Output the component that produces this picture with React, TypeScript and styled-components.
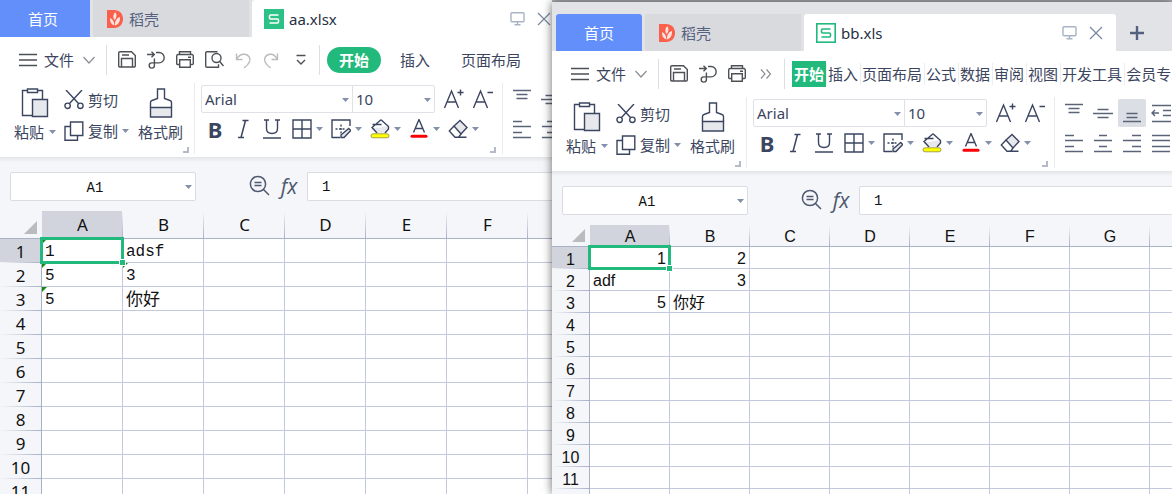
import React from "react";
import styled, { createGlobalStyle, css } from "styled-components";

const ui = `"Noto Sans", "Noto Sans CJK SC", sans-serif`;
const cjk = `"Noto Sans CJK SC", sans-serif`;
const mono = `"Liberation Mono", "Noto Sans CJK SC", monospace`;
const arial = `"Liberation Sans", "Noto Sans CJK SC", sans-serif`;

const ink = "#3b4560";
const green = "#21ba7c";
const gridLine = "#c3c9dc";
const headLine = "#a8b1c8";
const chrome = "#f5f6f9";

const GlobalStyle = createGlobalStyle`
  *, *::before, *::after { box-sizing: border-box; }
  body { margin: 0; overflow: hidden; font-family: ${ui}; font-size: 15px; color: ${ink}; }
  button, input, select { font: inherit; color: inherit; border: 0; padding: 0; margin: 0; background: none; }
  svg { display: block; flex: none; }
`;

/* ---------- windows ---------- */

const Desktop = styled.main`
  display: flex;
  height: 100vh;
  overflow: hidden;
  background: #b2b3b5;
`;

const Win = styled.section<{ $front?: boolean }>`
  flex: ${(p) => (p.$front ? "620 1 0" : "552 1 0")};
  min-width: 0;
  display: flex;
  flex-direction: column;
  background: #fff;
  ${(p) =>
    p.$front
      ? css`
          margin-top: 2px;
          position: relative;
          z-index: 1;
          box-shadow: 0 0 9px rgba(0, 0, 0, 0.6);
          clip-path: inset(-10px 0 0 -14px);
        `
      : css`
          overflow: hidden;
        `}
`;

const WinBody = styled.div`
  flex: 1;
  min-height: 0;
  overflow: hidden;
  display: flex;
  flex-direction: column;
`;

/* ---------- document tabs ---------- */

const TabStrip = styled.header<{ $inset?: boolean }>`
  display: flex;
  flex: none;
  gap: 3px;
  padding: ${(p) => (p.$inset ? "12px 0 0 4px" : "0")};
  background: #e2e3e7;
  overflow: hidden;
`;

const Tab = styled.button<{ $kind: "home" | "plain" }>`
  flex: none;
  display: flex;
  align-items: center;
  height: 37px;
  gap: 6px;
  line-height: 20px;
  ${(p) =>
    p.$kind === "home"
      ? css`
          justify-content: center;
          background: #638ffb;
          color: #fff;
        `
      : css`
          width: 156px;
          padding-left: 14px;
          background: #d9dadd;
          color: #56617f;
        `}
`;

const HomeTab = styled(Tab)<{ $round?: boolean }>`
  width: ${(p) => (p.$round ? "86px" : "90px")};
  padding-right: ${(p) => (p.$round ? "0" : "4px")};
  border-radius: ${(p) => (p.$round ? "3px 3px 0 0" : "0")};
`;

const ActiveTab = styled.div`
  flex: none;
  width: 312px;
  height: 37px;
  display: flex;
  align-items: center;
  padding: 0 12px;
  background: #fff;
  color: #262f43;
  border-radius: 3px 3px 0 0;
`;

const FileName = styled.span`
  flex: 1;
  padding-left: 5px;
  line-height: 20px;
`;

const TabAction = styled.button`
  width: 16px;
  height: 16px;
  margin-left: 11px;
  display: grid;
  place-items: center;
`;

const AddTab = styled.button`
  flex: none;
  width: 36px;
  height: 37px;
  display: grid;
  place-items: center;
`;

/* ---------- quick access bar and menu ---------- */

const Bar = styled.div`
  flex: none;
  display: flex;
  align-items: center;
  height: 46px;
  overflow: hidden;
`;

const FileButton = styled.button`
  flex: none;
  display: flex;
  align-items: center;
  height: 30px;
  width: 107px;
  padding-left: 19px;
  border-right: 1px solid #dcdee4;
  font-family: ${cjk};
  line-height: 20px;
`;

const FileLabel = styled.span`
  margin: 0 9px 0 7px;
`;

const QuickTools = styled.div`
  flex: none;
  display: flex;
  height: 30px;
  padding: 0 4px 0 5px;
  border-right: 1px solid #dcdee4;
`;

const QuickButton = styled.button`
  width: 29px;
  height: 30px;
  display: grid;
  place-items: center;
`;

const Menu = styled.nav<{ $dense?: boolean }>`
  display: flex;
  align-items: center;
  flex: none;
  padding-left: 7px;
  gap: ${(p) => (p.$dense ? "0" : "7px")};
`;

const MenuItem = styled.button<{ $dense?: boolean; $on?: boolean }>`
  flex: none;
  font-family: ${cjk};
  line-height: 20px;
  white-space: nowrap;
  ${(p) =>
    p.$dense
      ? css`
          height: 22px;
          padding: 0 2px 0 1px;
          border-left: 1px solid #eceef1;
        `
      : css`
          height: 26px;
          padding: 0 12px;
          border-radius: 13px;
        `}
  ${(p) =>
    p.$on &&
    css`
      height: 26px;
      background: ${green};
      border-color: ${green};
      color: #fff;
      font-weight: 700;
    `}
`;

/* ---------- ribbon ---------- */

const RibbonBar = styled.div`
  flex: none;
  display: flex;
  height: 74px;
  padding-bottom: 3px;
  overflow: hidden;
`;

const Group = styled.div`
  flex: none;
  display: flex;
  border-right: 1px solid #e8eaee;
`;

const ClipGroup = styled(Group)`
  padding: 1px 5px 1px 14px;
  align-items: flex-start;
`;

const FontGroup = styled(Group)`
  flex-direction: column;
  gap: 4px;
  padding: 2px 6px 1px;
`;

const AlignGroup = styled(Group)`
  flex-direction: column;
  gap: 2px;
  padding: 2px 0 0 5px;
  border-right: 0;
`;

const Row = styled.div`
  display: flex;
`;

const BigButton = styled.button<{ $wide?: boolean }>`
  display: flex;
  flex-direction: column;
  align-items: center;
  width: ${(p) => (p.$wide ? "45px" : "42px")};
  padding-top: 4px;
  gap: 4px;
  font-family: ${cjk};
  line-height: 20px;
  white-space: nowrap;
`;

const Inline = styled.span`
  display: flex;
  align-items: center;
  gap: 5px;
`;

const Stack = styled.div`
  width: 65px;
  margin: 0 9px 0 8px;
`;

const SmallButton = styled.button`
  display: flex;
  align-items: center;
  gap: 4px;
  height: 31px;
  font-family: ${cjk};
  line-height: 20px;
  white-space: nowrap;
`;

const Corner = styled.button`
  align-self: flex-end;
  margin-left: auto;
  width: 6px;
  height: 6px;
  border-right: 2px solid #b4bac8;
  border-bottom: 2px solid #b4bac8;
`;

const Combo = styled.label<{ $first?: boolean }>`
  position: relative;
  width: ${(p) => (p.$first ? "152px" : "83px")};
  height: 28px;
  margin-right: ${(p) => (p.$first ? "-1px" : "8px")};
  border: 1px solid #dfe1e6;
  border-radius: ${(p) => (p.$first ? "2px 0 0 2px" : "0 2px 2px 0")};
`;

const ComboSelect = styled.select`
  appearance: none;
  width: 100%;
  height: 26px;
  padding-left: 3px;
  line-height: 26px;
  outline: 0;
`;

const ComboCaret = styled.span`
  position: absolute;
  right: 3px;
  top: 12px;
  pointer-events: none;
`;

const SizeButtons = styled.div`
  display: flex;
  gap: 7px;
`;

const SizeButton = styled.button`
  width: 22px;
  height: 27px;
  display: grid;
  place-items: center;
`;

const FormatRow = styled(Row)`
  width: 295px;
  height: 36px;
`;

const LetterButton = styled.button`
  width: 28px;
  height: 24px;
  display: grid;
  place-items: center;
`;

const BoldLetter = styled.span`
  font-size: 22px;
  line-height: 24px;
  font-weight: 700;
`;

const SplitTools = styled.div`
  display: flex;
  gap: 8px;
  padding-left: 7px;
`;

const SplitButton = styled.button`
  display: flex;
  align-items: center;
  gap: 4px;
  height: 24px;
`;

const AlignRow = styled(Row)`
  gap: 1px;
`;

const AlignButton = styled.button<{ $on?: boolean }>`
  width: 28px;
  height: 28px;
  display: grid;
  place-items: center;
  border-radius: 2px;
  background: ${(p) => (p.$on ? "#dbdfe5" : "transparent")};
`;

/* ---------- formula bar ---------- */

const FormulaBar = styled.div`
  flex: none;
  display: flex;
  align-items: center;
  height: 54px;
  padding: 5px 0 0 10px;
  background: linear-gradient(#e3e4e7, ${chrome} 5px);
  font-family: ${mono};
  font-size: 14px;
  color: #111;
`;

const NameBox = styled.div`
  flex: none;
  display: flex;
  align-items: center;
  width: 186px;
  height: 29px;
  border: 1px solid #dadce2;
  border-radius: 2px;
  background: #fff;
`;

const NameInput = styled.input`
  width: 168px;
  height: 27px;
  padding-top: 2px;
  text-align: center;
  outline: 0;
`;

const NameCaret = styled.button`
  flex: 1;
  height: 27px;
  display: flex;
  align-items: center;
  justify-content: flex-end;
  padding-right: 3px;
`;

const FormulaTools = styled.div`
  flex: none;
  display: flex;
  align-items: center;
  justify-content: flex-end;
  gap: 9px;
  width: 111px;
  padding-right: 8px;
`;

const FormulaTool = styled.button`
  height: 29px;
  padding-bottom: 2px;
  display: grid;
  place-items: center;
  color: #4f5970;
`;

const Fx = styled.span`
  width: 20px;
  font-family: "Open Sans", ${ui};
  font-style: italic;
  font-weight: 400;
  font-size: 21px;
  line-height: 24px;
`;

const FormulaInput = styled.input`
  flex: 1;
  min-width: 0;
  height: 29px;
  padding: 0 0 0 14px;
  border: 1px solid #dadce2;
  border-right: 0;
  border-radius: 2px 0 0 2px;
  background: #fff;
  outline: 0;
`;

/* ---------- sheet ---------- */

const SheetArea = styled.div`
  flex: 1;
  min-height: 0;
  overflow: hidden;
  background: ${chrome};
`;

type Size = { $big?: boolean };

const Sheet = styled.table<Size>`
  table-layout: fixed;
  width: max-content;
  border-collapse: separate;
  border-spacing: 0;
  font-family: ${(p) => (p.$big ? mono : arial)};
  font-size: 16px;
  line-height: 19px;
  color: #111;
`;

const HeadCol = styled.col<Size>`
  width: ${(p) => (p.$big ? "42px" : "38px")};
`;

const DataCol = styled.col<Size>`
  width: ${(p) => (p.$big ? "81px" : "80px")};
`;

const ColHead = styled.th<Size & { $on?: boolean }>`
  height: ${(p) => (p.$big ? "28px" : "22px")};
  padding: ${(p) => (p.$big ? "0" : "2px 0 0")};
  font-family: ${(p) => (p.$big ? ui : arial)};
  font-size: ${(p) => (p.$big ? "17px" : "16px")};
  font-weight: 400;
  border-bottom: 1px solid ${headLine};
  background: linear-gradient(${chrome}, ${headLine}) right / 1px 100% no-repeat
    ${(p) => (p.$on ? "#d1d4dc" : chrome)};
`;

const CornerHead = styled.th`
  padding: 0 5px 4px 0;
  vertical-align: bottom;
  border-bottom: 1px solid ${headLine};
  background: ${chrome};
  svg {
    margin-left: auto;
  }
`;

const RowHead = styled.th<Size & { $on?: boolean }>`
  height: ${(p) => (p.$big ? "24px" : "22px")};
  padding: ${(p) => (p.$big ? "0" : "2px 0 0")};
  font-family: ${(p) => (p.$big ? ui : arial)};
  font-size: ${(p) => (p.$big ? "17px" : "16px")};
  font-weight: 400;
  border-right: 1px solid ${headLine};
  background: linear-gradient(90deg, ${chrome}, ${headLine}) bottom / 100% 1px no-repeat
    ${(p) => (p.$on ? "#d1d4dc" : chrome)};
`;

const Cell = styled.td<Size & { $num?: boolean; $flag?: boolean; $wide?: boolean }>`
  position: relative;
  padding: ${(p) => (p.$big ? "4px 3px 0" : "2px 3px 0")};
  ${(p) =>
    p.$wide &&
    css`
      font-size: 17px;
    `}
  border-right: 1px solid ${gridLine};
  border-bottom: 1px solid ${gridLine};
  background: #fff;
  text-align: ${(p) => (p.$num ? "right" : "left")};
  white-space: nowrap;
  ${(p) =>
    p.$flag &&
    css`
      &::before {
        content: "";
        position: absolute;
        left: 0;
        top: 0;
        border-top: 5px solid #128a12;
        border-right: 5px solid transparent;
      }
    `}
`;

const Selection = styled.span`
  position: absolute;
  inset: -2px;
  z-index: 1;
  border: 3px solid ${green};
  &::after {
    content: "";
    position: absolute;
    right: -5px;
    bottom: -5px;
    width: 7px;
    height: 7px;
    border: 1px solid #fff;
    background: ${green};
  }
`;

/* ---------- icons ---------- */

const Caret = () => (
  <svg width="7" height="4" viewBox="0 0 7 4">
    <path d="M0 0h7L3.5 4z" fill="#8290ac" />
  </svg>
);

type IconProps = { w?: number; h?: number; color?: string; sw?: number; children: React.ReactNode };
const Icon = ({ w = 20, h = 20, color = ink, sw = 1.4, children }: IconProps) => (
  <svg width={w} height={h} viewBox={`0 0 ${w} ${h}`} fill="none" stroke={color} strokeWidth={sw} aria-hidden="true">
    {children}
  </svg>
);

const tool = "#4d5055";
const Hamburger = () => (
  <Icon w={18} h={14} color={tool}><path d="M0 1.5h18M0 7h18M0 12.5h18" /></Icon>
);
const ChevronDown = () => (
  <Icon w={12} h={8} color="#8b8e95" sw={1.2}><path d="M.5 1 6 7l5.5-6" /></Icon>
);
const SaveIcon = () => (
  <Icon color={tool}>
    <path d="M3 1.7h11.5l3.8 3.8V16a1 1 0 0 1-1 1H3a1.3 1.3 0 0 1-1.3-1V3A1.3 1.3 0 0 1 3 1.7z" />
    <path d="M4.5 17V8.5h11V17M5 5h7" />
  </Icon>
);
const LinkIcon = () => (
  <Icon color={tool}>
    <path d="M1 4.5h7M5.5 1.8l2.8 2.7-2.8 2.7" />
    <path d="M10 2.5h3a5.2 5.2 0 0 1 0 10.4H5.8a2.6 2.6 0 1 0 2.6 2.6V8.5" />
  </Icon>
);
const PrintIcon = () => (
  <Icon color={tool}>
    <path d="M4.5 4.5V1.7h11v2.8M4.5 14.5H2.7a1 1 0 0 1-1-1V6A1.5 1.5 0 0 1 3.2 4.5h13.6A1.5 1.5 0 0 1 18.3 6v7.5a1 1 0 0 1-1 1h-1.8" />
    <path d="M4.7 9.8h10.6v7.5H4.7zM13 7.3h3" />
  </Icon>
);
const PreviewIcon = () => (
  <Icon color={tool}>
    <path d="M13.5 1.7H3A1.3 1.3 0 0 0 1.7 3v13A1.3 1.3 0 0 0 3 17.3h11.5v-3" />
    <circle cx="12.5" cy="8" r="4.5" />
    <path d="m15.7 11.5 3.8 4.5" />
  </Icon>
);
const UndoIcon = () => (
  <Icon color="#b9bbbf"><path d="M3.5 3.5v6h6M3.7 9.2C6 5 9 3.8 12 4.3c4 .8 6 4 4.5 7.5-1 2.5-3 4.5-5.5 6" /></Icon>
);
const RedoIcon = () => (
  <Icon color="#b9bbbf"><path d="M15.5 3.5v6h-6M15.3 9.2C13 5 10 3.8 7.5 4.3c-4 .8-6 4-4.5 7.5 1 2.5 3 4.5 5.5 6" /></Icon>
);
const MoreIcon = () => (
  <Icon w={12} h={12} color={tool}><path d="M1.500 1.500h9M2 6l4 4 4-4" /></Icon>
);
const DoubleChevron = () => (
  <Icon w={12} h={12} color="#8b8e95" sw={1.2}><path d="m1 1.500 4 4.500-4 4.500M6.500 1.500l4 4.500-4 4.500" /></Icon>
);
const Rice = () => (
  <svg width="16" height="18" viewBox="0 0 16 18" aria-hidden="true">
    <path d="M0 0h7c5.500 0 9 3.800 9 9s-3.500 9-9 9H0z" fill="#fa604c" />
    <path d="M7.500 15.500c-3-1-4.800-3.500-4.500-7.300C5.500 9 7 11 7.500 15.500zM8 15.500c-.2-4.500 1.500-7.500 5-8.500.3 4.500-1.500 7.500-5 8.500zM6.600 8.500C6 6 6.500 4 8.200 2.300 9.600 4 9.800 5.500 9 8c-.5.700-.9 1.300-1.200 2z" fill="#ffe3dd" />
  </svg>
);
const SheetLogo = ({ outline }: { outline?: boolean }) => (
  <Icon color={outline ? green : "#fff"} sw={1.6}>
    <rect x=".8" y=".8" width="18.4" height="18.4" fill={outline ? "#fff" : "#2cc187"} stroke={outline ? green : "#2cc187"} />
    <path d="M14.500 6H6.700Q5.500 6 5.500 7.200v1.600Q5.500 10 6.700 10h6.600q1.200 0 1.200 1.200v1.600q0 1.200-1.200 1.200H5.500" />
  </Icon>
);
const Monitor = () => (
  <Icon w={15} h={15} color="#a9b3c6"><rect x="1" y="1.7" width="13" height="9" rx="1" /><path d="M7.500 11v2.500M4.500 13.800h6" /></Icon>
);
const Close = () => (
  <Icon w={14} h={14} color="#7c89a5" sw={1.3}><path d="m1 1 12 12M13 1 1 13" /></Icon>
);
const Plus = () => (
  <Icon w={16} h={16} color="#53617f" sw={2.4}><path d="M8 1v14M1 8h14" /></Icon>
);
const PasteIcon = () => (
  <Icon w={28} h={30}>
    <path d="M6 2.500H1.500v25H11M17 2.500h4.500V11M6.500 1h10v3.500h-10z" />
    <path d="M11.500 11.500h15v17h-15z" fill="#e6e8ec" />
  </Icon>
);
const Scissors = () => (
  <Icon><path d="M2 0l12.500 13.500M18 0 5.500 13.500" /><circle cx="3.600" cy="15.800" r="2.700" /><circle cx="16.400" cy="15.800" r="2.700" /></Icon>
);
const CopyIcon = () => (
  <Icon><path d="M6.500 1h12.300v13.500H6.500z" /><path d="M6.500 5.500H1v13.700h12.500V14.500" /></Icon>
);
const Brush = () => (
  <Icon w={24} h={30}>
    <path d="M1.500 19.500h21v9.500h-21z" fill="#e6e8ec" />
    <path d="M1.500 19.500v-5q0-1.500 1.500-2l5.500-2V1h7v9.500l5.500 2q1.500.5 1.500 2v5" />
  </Icon>
);
const GrowFont = ({ minus }: { minus?: boolean }) => (
  <Icon w={22} h={22}><path d={minus ? "M1.500 20 8.500 3l7 17M4 14h9M15.500 4.500H21" : "M1.500 20 8.500 3l7 17M4 14h9M14.500 4.500h6M17.500 1.500v6"} /></Icon>
);
const ItalicIcon = () => (
  <Icon sw={1.5}><path d="M9.500 1.500h6M5 18.500h6M12.500 1.500l-4.500 17" /></Icon>
);
const UnderlineIcon = () => (
  <Icon><path d="M3 1h5M14 1h5M5.500 1v8.500c0 3 2 5 5.500 5s5.500-2 5.500-5V1M2 19h18" /></Icon>
);
const BordersIcon = () => (
  <Icon><path d="M1 1h18v18H1zM10 1v18M1 10h18" /></Icon>
);
const DrawBorder = () => (
  <Icon>
    <path d="M1 19V1h18v6M1 18.500h8" />
    <path d="M10 5.500v9M4.500 10h10" strokeDasharray="2 1.500" />
    <path d="m17.700 9.500 2 2-6.700 7H10V16z" fill="#e6e8ec" />
  </Icon>
);
const Bucket = () => (
  <Icon>
    <path d="M11 1 2.500 8v3L7 14h8l3.500-4V6.800z" fill="#e6e8ec" stroke="none" />
    <path d="M11 1 18 7 10 8.500 2.500 9z" fill="#fff" stroke="none" />
    <path d="M11 .8 2 8.500 7 14M15 14l3.500-4V7.500L11 .8M2.500 5.500h9" />
    <rect x="1" y="14.800" width="18" height="4" rx="2" fill="#ff0" stroke="#8d8b3a" strokeWidth=".8" />
  </Icon>
);
const FontColor = () => (
  <Icon><path d="m4.500 13.500 5.500-13 5.500 13M6.500 9.500h7" /><path d="M3 17.200h14" stroke="#fb0007" strokeWidth="3" strokeLinecap="round" /></Icon>
);
const Eraser = () => (
  <Icon>
    <path d="M6 7 12 1.500l7 7-6 6.500z" fill="#e6e8ec" />
    <path d="M6 7 1.300 12 7 18.300h3.500l2.500-3.300M7 18.300h11.500" />
  </Icon>
);
const ZoomIcon = () => (
  <Icon w={21} h={21} color="#4f5970" sw={1.5}><circle cx="9" cy="9" r="7.600" /><path d="m14.500 14.500 5.500 5.500M5.500 7.500h7M5.500 10.500h7" /></Icon>
);

const lineColor = "#5a6377";
const Lines = ({ d }: { d: string }) => (
  <Icon color={lineColor}><path d={d} /></Icon>
);

const alignTop = [
  { name: "顶端对齐", d: "M1 1.500h18M4.500 5.500h11M4.500 9.500h11" },
  { name: "垂直居中", d: "M4.500 6.500h11M0 10.500h20M4.500 14.500h11" },
  { name: "底端对齐", d: "M4.500 10.500h11M4.500 14.500h11M1 18.500h18" },
  { name: "减少缩进", d: "M1 2.500h20M12 7.500h9M12 12.500h9M1 18.500h20M1 10h7M4 7l-3 3 3 3" },
];
const alignBottom = [
  { name: "左对齐", d: "M1 2.500h9M1 7.500h18M1 13.500h9M1 18.500h18" },
  { name: "水平居中", d: "M6 2.500h8M1 7.500h18M6 13.500h8M1 18.500h18" },
  { name: "右对齐", d: "M10 2.500h9M1 7.500h18M10 13.500h9M1 18.500h18" },
  { name: "两端对齐", d: "M1 2.500h18M1 7.500h18M1 13.500h18M1 18.500h18" },
];

/* ---------- parts ---------- */

const quick: Record<string, [string, React.FC]> = {
  save: ["保存", SaveIcon],
  link: ["输出为PDF", LinkIcon],
  print: ["打印", PrintIcon],
  preview: ["打印预览", PreviewIcon],
  undo: ["撤销", UndoIcon],
  redo: ["恢复", RedoIcon],
  more: ["自定义", MoreIcon],
  expand: ["更多", DoubleChevron],
};

const splitTools: [string, React.FC][] = [
  ["边框", BordersIcon],
  ["绘图边框", DrawBorder],
  ["填充颜色", Bucket],
  ["字体颜色", FontColor],
  ["清除", Eraser],
];

const Ribbon = ({ bottomAligned }: { bottomAligned?: boolean }) => (
  <RibbonBar>
    <ClipGroup>
      <BigButton>
        <PasteIcon />
        <Inline>粘贴<Caret /></Inline>
      </BigButton>
      <Stack>
        <SmallButton><Scissors />剪切</SmallButton>
        <SmallButton><CopyIcon />复制<Caret /></SmallButton>
      </Stack>
      <BigButton $wide>
        <Brush />
        格式刷
      </BigButton>
      <Corner aria-label="剪贴板设置" />
    </ClipGroup>
    <FontGroup>
      <Row>
        <Combo $first>
          <ComboSelect aria-label="字体" defaultValue="Arial"><option>Arial</option></ComboSelect>
          <ComboCaret><Caret /></ComboCaret>
        </Combo>
        <Combo>
          <ComboSelect aria-label="字号" defaultValue="10"><option>10</option></ComboSelect>
          <ComboCaret><Caret /></ComboCaret>
        </Combo>
        <SizeButtons>
          <SizeButton aria-label="增大字号"><GrowFont /></SizeButton>
          <SizeButton aria-label="减小字号"><GrowFont minus /></SizeButton>
        </SizeButtons>
      </Row>
      <FormatRow>
        <LetterButton aria-label="加粗"><BoldLetter>B</BoldLetter></LetterButton>
        <LetterButton aria-label="倾斜"><ItalicIcon /></LetterButton>
        <LetterButton aria-label="下划线"><UnderlineIcon /></LetterButton>
        <SplitTools>
          {splitTools.map(([name, Glyph]) => (
            <SplitButton key={name} aria-label={name}><Glyph /><Caret /></SplitButton>
          ))}
        </SplitTools>
        <Corner aria-label="字体设置" />
      </FormatRow>
    </FontGroup>
    <AlignGroup>
      <AlignRow>
        {alignTop.map((a, i) => (
          <AlignButton key={a.name} aria-label={a.name} $on={bottomAligned && i === 2}><Lines d={a.d} /></AlignButton>
        ))}
      </AlignRow>
      <AlignRow>
        {alignBottom.map((a) => (
          <AlignButton key={a.name} aria-label={a.name}><Lines d={a.d} /></AlignButton>
        ))}
      </AlignRow>
    </AlignGroup>
  </RibbonBar>
);

type CellData = { text: string; num?: boolean; flag?: boolean; wide?: boolean };

type WorkbookProps = {
  file: string;
  front?: boolean;
  tools: string[];
  menu: string[];
  columns: string[];
  rows: string[];
  cells: Record<string, CellData>;
};

const Workbook = ({ file, front, tools, menu, columns, rows, cells }: WorkbookProps) => (
  <Win $front={front} aria-label={file}>
    <WinBody>
      <TabStrip $inset={front}>
        <HomeTab $kind="home" $round={front}>首页</HomeTab>
        <Tab $kind="plain"><Rice />稻壳</Tab>
        <ActiveTab>
          <SheetLogo outline={front} />
          <FileName>{file}</FileName>
          <TabAction aria-label="窗口"><Monitor /></TabAction>
          <TabAction aria-label="关闭"><Close /></TabAction>
        </ActiveTab>
        {front && <AddTab aria-label="新建"><Plus /></AddTab>}
      </TabStrip>
      <Bar>
        <FileButton>
          <Hamburger />
          <FileLabel>文件</FileLabel>
          <ChevronDown />
        </FileButton>
        <QuickTools>
          {tools.map((t) => {
            const [name, Glyph] = quick[t];
            return <QuickButton key={t} aria-label={name}><Glyph /></QuickButton>;
          })}
        </QuickTools>
        <Menu $dense={front}>
          {menu.map((m, i) => (
            <MenuItem key={m} $dense={front} $on={i === 0}>{m}</MenuItem>
          ))}
        </Menu>
      </Bar>
      <Ribbon bottomAligned={front} />
      <FormulaBar>
        <NameBox>
          <NameInput aria-label="名称框" defaultValue="A1" />
          <NameCaret aria-label="名称列表"><Caret /></NameCaret>
        </NameBox>
        <FormulaTools>
          <FormulaTool aria-label="浏览公式"><ZoomIcon /></FormulaTool>
          <FormulaTool aria-label="插入函数"><Fx>fx</Fx></FormulaTool>
        </FormulaTools>
        <FormulaInput aria-label="编辑栏" defaultValue="1" />
      </FormulaBar>
      <SheetArea>
        <Sheet $big={!front}>
          <colgroup>
            <HeadCol $big={!front} />
            {columns.map((c) => <DataCol key={c} $big={!front} />)}
          </colgroup>
          <thead>
            <tr>
              <CornerHead aria-label="全选">
                <svg width="13" height="13" viewBox="0 0 13 13"><path d="M13 0v13H0z" fill="#b9bbbf" /></svg>
              </CornerHead>
              {columns.map((c) => (
                <ColHead key={c} scope="col" $big={!front} $on={c === "A"}>{c.trim()}</ColHead>
              ))}
            </tr>
          </thead>
          <tbody>
            {rows.map((r) => (
              <tr key={r}>
                <RowHead scope="row" $big={!front} $on={r === "1"}>{r}</RowHead>
                {columns.map((c) => {
                  const cell = cells[c + r];
                  return (
                    <Cell key={c} $big={!front} $num={cell?.num} $flag={cell?.flag} $wide={cell?.wide}>
                      {cell?.text}
                      {c + r === "A1" && <Selection />}
                    </Cell>
                  );
                })}
              </tr>
            ))}
          </tbody>
        </Sheet>
      </SheetArea>
    </WinBody>
  </Win>
);

const rowNumbers = ["1", "2", "3", "4", "5", "6", "7", "8", "9", "10", "11"];

export default function App() {
  return (
    <>
      <GlobalStyle />
      <Desktop>
        <Workbook
          file="aa.xlsx"
          tools={["save", "link", "print", "preview", "undo", "redo", "more"]}
          menu={["开始", "插入", "页面布局"]}
          columns={["A", "B", "C", "D", "E", "F", " "]}
          rows={rowNumbers}
          cells={{
            A1: { text: "1", flag: true },
            B1: { text: "adsf" },
            A2: { text: "5", flag: true },
            B2: { text: "3", flag: true },
            A3: { text: "5", flag: true },
            B3: { text: "你好", wide: true },
          }}
        />
        <Workbook
          front
          file="bb.xls"
          tools={["save", "link", "print", "expand"]}
          menu={["开始", "插入", "页面布局", "公式", "数据", "审阅", "视图", "开发工具", "会员专享"]}
          columns={["A", "B", "C", "D", "E", "F", "G", " "]}
          rows={[...rowNumbers, ""]}
          cells={{
            A1: { text: "1", num: true },
            B1: { text: "2", num: true },
            A2: { text: "adf" },
            B2: { text: "3", num: true },
            A3: { text: "5", num: true },
            B3: { text: "你好" },
          }}
        />
      </Desktop>
    </>
  );
}
